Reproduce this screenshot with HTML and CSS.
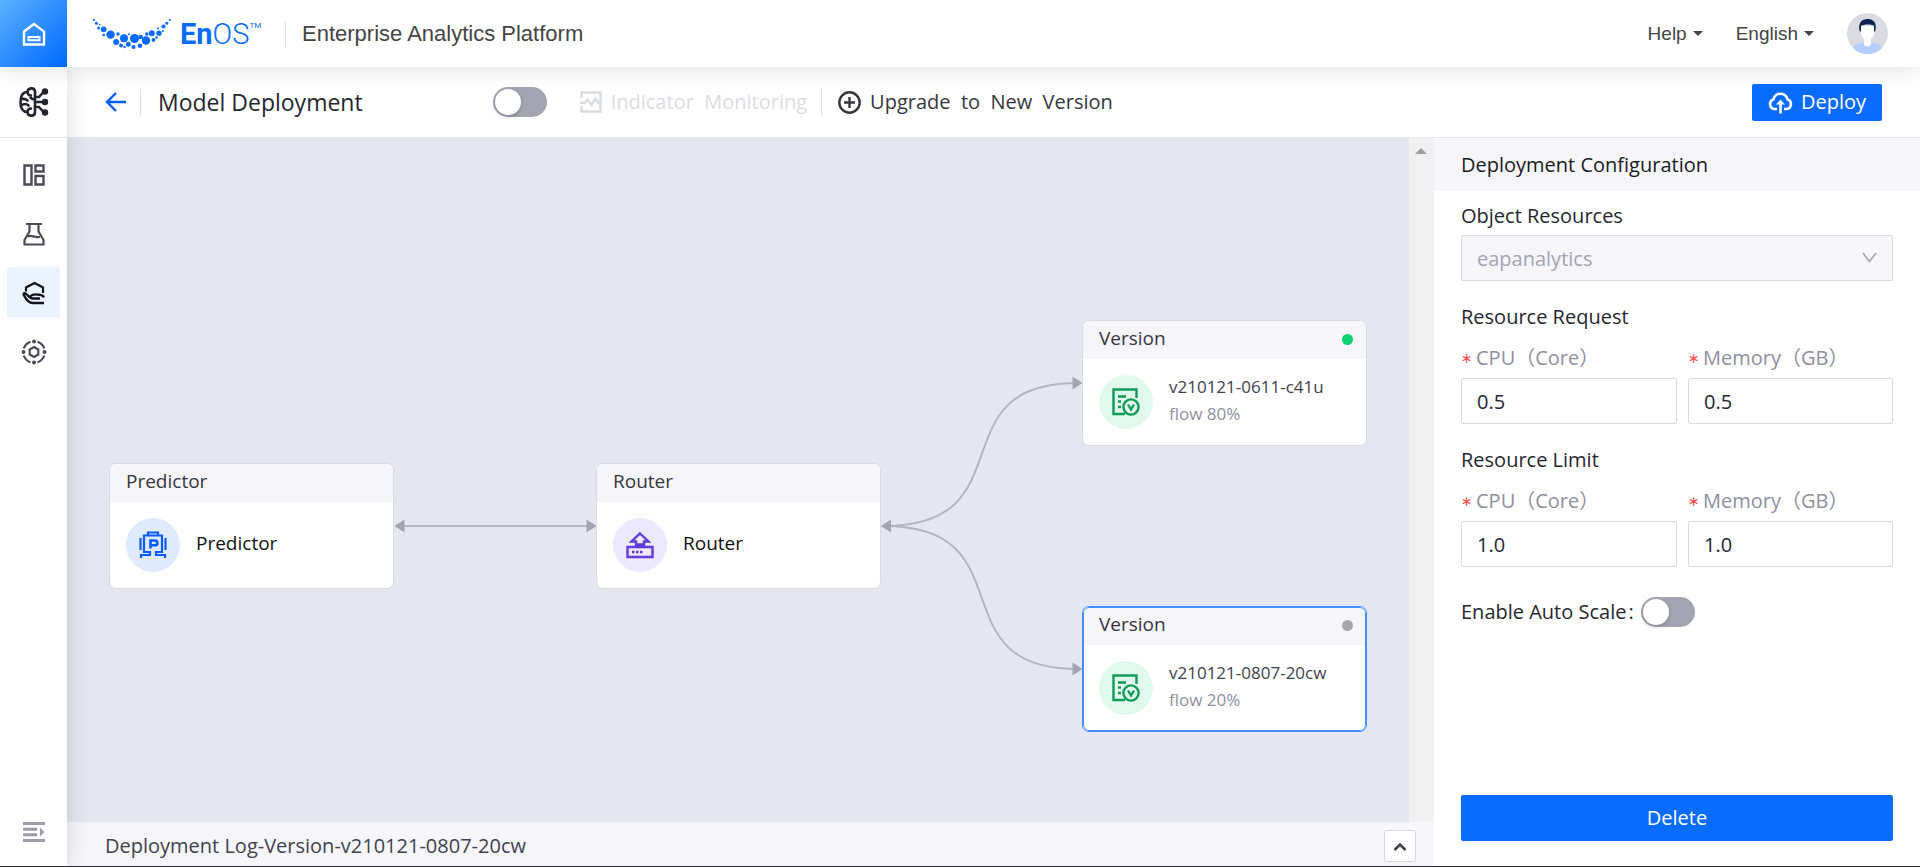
FILE: index.html
```html
<!DOCTYPE html>
<html lang="en">
<head>
<meta charset="utf-8">
<title>Model Deployment</title>
<link rel="stylesheet" href="styles.css">
</head>
<body>
<header class="topbar">
  <a class="home" href="#" aria-label="Home">
    <svg width="24" height="24" viewBox="0 0 24 24" fill="none" stroke="#fff" stroke-width="2.4"><path d="M2 9.500 12 2l10 7.500V22.500H2z"/><path d="M6.500 15h11v3.200h-11z" stroke-width="2"/></svg>
  </a>
  <div class="brand">
    <svg class="brand-dots" width="79" height="34" viewBox="93 18 79 34" fill="#0a6cff"><circle cx="94" cy="21" r="1.100"/><circle cx="96.400" cy="24.200" r="1.500"/><circle cx="98.600" cy="29" r="1.500"/><circle cx="99.700" cy="25.600" r=".8"/><circle cx="103.700" cy="30.300" r="2.900"/><circle cx="103.700" cy="36" r="1.300"/><circle cx="110.600" cy="35.600" r="4.200"/><circle cx="118" cy="35" r="1.700"/><circle cx="116.200" cy="43" r="3"/><circle cx="124" cy="39.300" r="4"/><circle cx="121" cy="46.500" r="1.900"/><circle cx="124.500" cy="48" r="1.200"/><circle cx="128.300" cy="45.300" r="2.500"/><circle cx="129" cy="35.200" r="1"/><circle cx="134.500" cy="39.500" r="4.600"/><circle cx="133.500" cy="48" r="2.100"/><circle cx="140.800" cy="38" r="2.300"/><circle cx="140" cy="46.800" r="2.300"/><circle cx="146" cy="41.500" r="4.200"/><circle cx="146.800" cy="35" r="1.800"/><circle cx="151.800" cy="34.300" r="3"/><circle cx="153.500" cy="41" r="1.900"/><circle cx="156.500" cy="38.500" r="1.300"/><circle cx="159" cy="34.300" r="2.700"/><circle cx="158" cy="29.500" r="1.100"/><circle cx="163.500" cy="27.500" r="2.100"/><circle cx="163" cy="32" r="1"/><circle cx="166.800" cy="24.300" r="1.500"/><circle cx="169.800" cy="21" r="1.100"/></svg>
    <span class="brand-name"><b>En</b>OS</span><span class="brand-tm">TM</span>
  </div>
  <span class="product">Enterprise Analytics Platform</span>
  <nav class="topnav">
    <button class="top-menu" type="button">Help <i class="caret"></i></button>
    <button class="top-menu" type="button">English <i class="caret"></i></button>
    <button class="avatar" type="button" aria-label="Account">
      <svg width="41" height="41" viewBox="0 0 41 41"><defs><clipPath id="face"><circle cx="20.500" cy="20.500" r="20.500"/></clipPath></defs><g clip-path="url(#face)"><path fill="#dadae3" d="M0 0h41v41H0z"/><path fill="#b4ceff" d="M5 41c0-8 4-11 12-11.500h7C32 30 36 33 36 41z"/><path fill="#fff" d="M17 24h7v6a3.500 3.500 0 0 1-7 0z"/><path fill="#fff" d="M13.500 13h14v5c0 5-3.500 9.500-7 9.500s-7-4.500-7-9.500z"/><path fill="#0b2350" d="M13 19c-2-7 0-10 3-12 3-1.500 7-1.200 9 0 3 1.500 5 5 3 12l-1-1v-5c-1-2-11-2-13 0v5z"/></g></svg>
    </button>
  </nav>
</header>

<div class="shell">
  <nav class="sidebar">
    <a class="side-app" href="#" aria-label="AI studio">
      <svg width="32" height="32" viewBox="0 0 32 32" fill="none" stroke="#24242e" stroke-width="2.600" stroke-linecap="round"><path d="M17 5.500c-.5-4.500-7.500-4-7.500.500-5 0-7 4-7 10s2 10 7 10c0 4.500 7 5 7.500.500zM3 13c3-.5 5 0 6.500 1.500M3 19.500c3-2 6-1.500 7.500 0M17 13.500c-2 0-3.500-.5-4.500-2M9.500 6c0 2 1.500 3.500 3.500 3.500M9.500 26c0-2 1.500-3.500 3.500-3.500"/><path d="M17 11h4l4-4.500M17 16h8M17 21h4l4 4.500"/><g fill="#24242e" stroke="none"><circle cx="27" cy="5.500" r="3.200"/><circle cx="27" cy="16" r="3.200"/><circle cx="27" cy="26.500" r="3.200"/></g></svg>
    </a>
    <div class="side-list">
      <a class="side-item" href="#" aria-label="Dashboard"><svg width="24" height="24" viewBox="0 0 24 24" fill="none" stroke="#4b4b57" stroke-width="2.400"><path d="M2.500 2.500h7v19h-7zM13.500 2.500h8v6h-8zM13.500 13h8v8.500h-8z"/></svg></a>
      <a class="side-item" href="#" aria-label="Lab"><svg width="24" height="24" viewBox="0 0 24 24" fill="none" stroke="#4b4b57" stroke-width="2.200"><path d="M4 2h16M7.500 2v7.500L2.500 18v4.500h19V18l-5-8.500V2M5.500 14.500c4-2 6 1.500 12.500.5"/></svg></a>
      <a class="side-item active" href="#" aria-label="Model deployment"><svg width="24" height="24" viewBox="0 0 24 24" fill="none" stroke="#14141c" stroke-width="2.200"><path d="M4 10.500V6.500L12.500 2 21 6.500v5.500"/><path d="M1.200 13c1.300-1.500 2.600-.5 3.600.5 1.800 1.800 2.700 4 5.700 4h7.500M1.200 13c1.800 3 4 9 9.300 9H22M8 15.500c2-2 4-2.200 7-2 3.500 0 6 .5 7 3" stroke-width="2.300"/></svg></a>
      <a class="side-item" href="#" aria-label="Settings"><svg width="26" height="26" viewBox="0 0 26 26" fill="none" stroke="#4b4b57" stroke-width="2.200"><path d="M13 8l4.300 2.500v5L13 18l-4.300-2.500v-5z"/><path d="M16.500 2.700a11 11 0 0 1 6.800 6.800M23.300 16.500a11 11 0 0 1-6.800 6.800M9.500 23.300a11 11 0 0 1-6.800-6.800M2.700 9.500a11 11 0 0 1 6.800-6.800"/><g fill="#4b4b57" stroke="none"><circle cx="13" cy="2.500" r="2"/><circle cx="23.500" cy="13" r="2"/><circle cx="13" cy="23.500" r="2"/><circle cx="2.500" cy="13" r="2"/></g></svg></a>
    </div>
    <button class="side-expand" type="button" aria-label="Expand menu"><svg width="22" height="20" viewBox="0 0 22 20" fill="#9c9cac"><path d="M0 0h22v3H0zM0 5.700h14v3H0zM0 11.300h14v3H0zM0 17h22v3H0zM17 5.500l4.500 4.500-4.500 4.500z"/></svg></button>
  </nav>

  <main class="main">
    <div class="toolbar">
      <a class="back" href="#" aria-label="Back"><svg width="22" height="20" viewBox="0 0 22 20" fill="none" stroke="#0a5cff" stroke-width="2.400"><path d="M21 10H2M11 1L2 10l9 9"/></svg></a>
      <i class="divider"></i>
      <h1 class="page-title">Model Deployment</h1>
      <input class="switch" type="checkbox" role="switch" aria-label="Enable deployment">
      <button class="tool tool-off" type="button" disabled><svg width="22" height="22" viewBox="0 0 22 22" fill="none" stroke="#dcdce3" stroke-width="2.400"><path d="M1.500 7V1.500h19v19h-19V15M0 12h4.500l3-3.500 4 5.500 4-6.500 3 4.500H22"/></svg>Indicator&nbsp; Monitoring</button>
      <i class="divider"></i>
      <button class="tool" type="button"><svg width="23" height="23" viewBox="0 0 23 23" fill="none" stroke="#363640" stroke-width="2.400"><circle cx="11.500" cy="11.500" r="10.200"/><path d="M11.500 6v11M6 11.500h11"/></svg>Upgrade&nbsp; to&nbsp; New&nbsp; Version</button>
      <button class="primary deploy" type="button"><svg width="25" height="24" viewBox="0 0 25 24" fill="none" stroke="#fff" stroke-width="2.600"><path d="M9 19H6.500a5 5 0 0 1-1-9.700 7.200 7.200 0 0 1 14 0 5 5 0 0 1-1 9.700H16M12.500 23.500V13"/><path d="M12.500 9.500l4.500 5H8z" fill="#fff" stroke="none"/></svg>Deploy</button>
    </div>

    <div class="work">
      <section class="stage">
        <div class="stage-row">
          <div class="canvas">
            <svg class="edges" width="1342" height="684" viewBox="67 138 1342 684" fill="none" stroke="#b4b4c2" stroke-width="2"><path d="M402 526H590M884 526C1028 526 936 383 1077 383M884 526C1028 526 936 669 1077 669"/><path fill="#a3a3b2" stroke="none" d="M394.500 526l10-6.500v13zM596.500 526l-10-6.500v13zM881 526l10-6.500v13zM1082.500 383l-10-6.500v13zM1082.500 669l-10-6.500v13z"/></svg>
            <article class="node node-predictor">
              <h2 class="node-head">Predictor</h2>
              <div class="node-body"><span class="node-icon blue"><svg width="28" height="28" viewBox="0 0 28 28" fill="none" stroke="#0a5cff" stroke-width="2.200"><path d="M1.500 7v12M26.500 7v12M9 4V1.500h10V4M2 27v-3h9v-3H5V4.500h18V21h-6v3h9v3"/><path d="M11.500 17.500V9.500h4.500a2.300 2.300 0 0 1 0 4.800h-4.500" stroke-width="2.600"/></svg></span><p class="node-label">Predictor</p></div>
            </article>
            <article class="node node-router">
              <h2 class="node-head">Router</h2>
              <div class="node-body"><span class="node-icon violet"><svg width="28" height="28" viewBox="0 0 28 28" fill="none" stroke="#5a3ddb" stroke-width="2.400"><path d="M1.500 16h25v10h-25zM14 2.500l8.500 8H18v3h-8v-3H5.500z"/><path d="M6 21h2.500M10 21h2.500M14 21h2.500"/></svg></span><p class="node-label">Router</p></div>
            </article>
            <article class="node node-v1">
              <h2 class="node-head">Version<i class="dot on"></i></h2>
              <div class="node-body"><span class="node-icon green"><svg width="28" height="28" viewBox="0 0 28 28" fill="none" stroke="#0f9b57" stroke-width="2.400"><path d="M13 26H1.500V1.500h23V10M6 8.500h8M6 13.500h3M6 19h3"/><circle cx="19" cy="19" r="7.600"/><path d="M16 16.500l3 5 3-5"/></svg></span><div class="node-text"><p class="node-id">v210121-0611-c41u</p><p class="node-flow">flow 80%</p></div></div>
            </article>
            <article class="node node-v2 selected">
              <h2 class="node-head">Version<i class="dot"></i></h2>
              <div class="node-body"><span class="node-icon green"><svg width="28" height="28" viewBox="0 0 28 28" fill="none" stroke="#0f9b57" stroke-width="2.400"><path d="M13 26H1.500V1.500h23V10M6 8.500h8M6 13.500h3M6 19h3"/><circle cx="19" cy="19" r="7.600"/><path d="M16 16.500l3 5 3-5"/></svg></span><div class="node-text"><p class="node-id">v210121-0807-20cw</p><p class="node-flow">flow 20%</p></div></div>
            </article>
          </div>
          <div class="scroll"><i class="scroll-up"></i></div>
        </div>
        <footer class="log">
          <span>Deployment Log-Version-v210121-0807-20cw</span>
          <button class="log-toggle" type="button" aria-label="Show log"><svg width="14" height="9" viewBox="0 0 14 9" fill="none" stroke="#41414d" stroke-width="2.600"><path d="M1.500 8L7 2.500 12.500 8"/></svg></button>
        </footer>
      </section>

      <aside class="panel">
        <h2 class="panel-head">Deployment Configuration</h2>
        <form class="form">
          <label class="form-title" for="res">Object Resources</label>
          <div class="select-wrap">
            <select class="field" id="res" disabled><option>eapanalytics</option></select>
            <svg class="chevron" width="15" height="11" viewBox="0 0 15 11" fill="none" stroke="#a3a3b2" stroke-width="1.600"><path d="M1 1l6.500 8.500L14 1"/></svg>
          </div>
          <fieldset class="group">
            <legend class="form-title">Resource Request</legend>
            <div class="pair">
              <div><label class="req" for="rc">CPU（Core）</label><input class="field" id="rc" value="0.5"></div>
              <div><label class="req" for="rm">Memory（GB）</label><input class="field" id="rm" value="0.5"></div>
            </div>
          </fieldset>
          <fieldset class="group">
            <legend class="form-title">Resource Limit</legend>
            <div class="pair">
              <div><label class="req" for="lc">CPU（Core）</label><input class="field" id="lc" value="1.0"></div>
              <div><label class="req" for="lm">Memory（GB）</label><input class="field" id="lm" value="1.0"></div>
            </div>
          </fieldset>
          <div class="scale"><label for="auto">Enable Auto Scale<span class="colon">:</span></label><input class="switch" id="auto" type="checkbox" role="switch"></div>
          <button class="primary delete" type="button">Delete</button>
        </form>
      </aside>
    </div>
  </main>
</div>
</body>
</html>
```
FILE: styles.css
```css
*, *::before, *::after { box-sizing: border-box; }
body {
  margin: 0;
  min-height: 100vh;
  display: flex;
  flex-direction: column;
  border-bottom: 1px solid #1f3038;
  background: #fff;
  color: #26262f;
  font: 20px/28px "Open Sans", "Noto Sans CJK SC", sans-serif;
}
h1, h2, p { margin: 0; font-weight: 400; }
button, input, select { font: inherit; color: inherit; margin: 0; }
button { border: 0; background: none; padding: 0; cursor: pointer; }
svg { display: block; flex: none; }

.topbar {
  position: relative;
  z-index: 3;
  display: flex;
  align-items: center;
  height: 67px;
  background: #fff;
  box-shadow: 0 2px 24px rgba(0, 0, 0, .13);
  font-family: "Liberation Sans", Arial, sans-serif;
  color: #444;
}
.home {
  display: flex;
  align-items: center;
  justify-content: center;
  width: 67px;
  height: 67px;
  background: linear-gradient(135deg, #5ab1ff, #0068ff);
}
.brand {
  display: flex;
  align-items: center;
  height: 24px;
  width: 219px;
  padding-left: 26px;
  border-right: 1px solid #dcdcdc;
  color: #0a6cff;
}
.brand-name { margin-left: 8px; font: 300 29px/34px Roboto, sans-serif; }
.brand-name b { font-weight: 700; }
.brand-tm { align-self: flex-start; font: 8px/8px Roboto, sans-serif; }
.product { margin-left: 16px; font-size: 22px; }
.topnav { display: flex; align-items: center; margin-left: auto; padding-right: 32px; }
.top-menu { display: flex; align-items: center; gap: 6px; margin-right: 33px; font-size: 19px; }
.caret { border: 5px solid transparent; border-top-color: #444; border-bottom: 0; }
.avatar { border-radius: 50%; }

.shell { flex: 1; display: flex; }
.sidebar {
  position: relative;
  z-index: 2;
  flex: none;
  display: flex;
  flex-direction: column;
  width: 67px;
  background: #fff;
  box-shadow: 2px 0 24px rgba(0, 0, 0, .12);
}
.side-app {
  display: flex;
  align-items: center;
  justify-content: center;
  height: 71px;
  border-bottom: 1px solid #e4e4ea;
}
.side-list { display: flex; flex-direction: column; gap: 8px; padding: 11px 7px 0; }
.side-item {
  display: flex;
  align-items: center;
  justify-content: center;
  height: 51px;
  border-radius: 3px;
}
.side-item.active { background: #eaf3ff; }
.side-expand { margin: auto auto 24px; }

.main { flex: 1; min-width: 0; display: flex; flex-direction: column; }
.toolbar {
  display: flex;
  align-items: center;
  height: 71px;
  padding: 0 38px;
  border-bottom: 1px solid #e4e4ea;
}
.divider { width: 1px; height: 25px; background: #dcdce3; }
.back { margin-right: 13px; }
.page-title { margin-left: 17px; font-size: 23px; }
.toolbar .switch { margin: 0 33px 0 130px; }
.tool { display: flex; align-items: center; gap: 9px; color: #363640; }
.tool-off { margin-right: 14px; color: #dcdce3; }
.divider + .tool { margin-left: 16px; }
.primary { background: #0a6cff; color: #fff; border-radius: 2px; }
.deploy {
  display: flex;
  align-items: center;
  gap: 8px;
  height: 37px;
  margin-left: auto;
  padding: 0 16px;
}
.switch {
  appearance: none;
  flex: none;
  width: 54px;
  height: 30px;
  padding: 2px;
  border-radius: 15px;
  background: #a3a3b2;
}
.switch::before {
  content: "";
  display: block;
  width: 26px;
  height: 26px;
  border-radius: 50%;
  background: #fff;
  box-shadow: 0 2px 4px rgba(0, 35, 11, .2);
}

.work { flex: 1; display: flex; }
.stage { flex: 1; min-width: 0; display: flex; flex-direction: column; }
.stage-row { flex: 1; display: flex; }
.canvas { position: relative; flex: 1; overflow: hidden; background: #e6e6f0; }
.edges { position: absolute; left: 0; top: 0; }
.node {
  position: absolute;
  width: 285px;
  height: 126px;
  border: 1px solid #dadae4;
  border-radius: 7px;
  background: #fff;
  overflow: hidden;
}
.node.selected { border-color: #3f8fff; }
.node.selected::after {
  content: "";
  position: absolute;
  inset: 0;
  border: 1px solid #3f8fff;
  border-radius: 6px;
}
.node-predictor { left: 42px; top: 325px; }
.node-router { left: 529px; top: 325px; }
.node-v1 { left: 1015px; top: 182px; }
.node-v2 { left: 1015px; top: 468px; }
.node-head {
  display: flex;
  align-items: center;
  justify-content: space-between;
  height: 38px;
  padding: 0 13px 5px 16px;
  background: #f5f5fa;
  font-size: 19px;
  color: #36363f;
}
.dot { width: 11px; height: 11px; margin-top: 3px; border-radius: 50%; background: #a8a8a8; }
.dot.on { background: #0dd16e; }
.node-body { display: flex; align-items: center; padding: 16px; gap: 16px; }
.node-icon {
  flex: none;
  display: flex;
  align-items: center;
  justify-content: center;
  width: 54px;
  height: 54px;
  border-radius: 50%;
}
.blue { background: #dfeaff; }
.violet { background: #ece8fd; }
.green { background: #e1f9ec; }
.node-label { padding-bottom: 4px; font-size: 19px; color: #111; }
.node-text { margin: -4px 0 0; }
.node-id { font-size: 17px; line-height: 27px; color: #41414d; }
.node-flow { font-size: 17px; line-height: 27px; color: #8f8f9f; }

.scroll { width: 25px; padding: 10px 6px; background: #f0f0f0; }
.scroll-up { display: block; border: 6px solid transparent; border-bottom-color: #a0a0a0; border-top: 0; width: 0; }
.log {
  display: flex;
  align-items: center;
  justify-content: space-between;
  height: 44px;
  padding: 4px 18px 0 38px;
  background: #f5f5fa;
  color: #41414d;
}
.log-toggle {
  display: flex;
  align-items: center;
  justify-content: center;
  width: 32px;
  height: 32px;
  border: 1px solid #d9d9e2;
  border-radius: 2px;
  background: #fff;
}

.panel { flex: none; display: flex; flex-direction: column; width: 486px; background: #fff; }
.panel-head { padding: 13px 27px 12px; background: #f5f5fa; font-size: 20px; color: #1b1b22; }
.form { flex: 1; display: flex; flex-direction: column; padding: 11px 27px 25px; }
.form-title { display: block; padding: 0; line-height: 28px; }
.field {
  display: block;
  width: 100%;
  height: 46px;
  padding: 1px 15px 0;
  border: 1px solid #d9d9e2;
  border-radius: 2px;
  background: #fff;
  outline: 0;
}
.select-wrap { position: relative; margin-top: 5px; }
.select-wrap .field { appearance: none; background: #f5f5fa; color: #a3a3b2; opacity: 1; }
.chevron { position: absolute; right: 16px; top: 17px; }
.group { margin: 22px 0 0; padding: 0; border: 0; min-width: 0; }
.pair { display: grid; grid-template-columns: 216fr 205fr; gap: 11px; padding-top: 13px; }
.pair label { display: flex; align-items: center; margin-bottom: 6px; line-height: 28px; color: #8f8f9f; }
.req::before {
  content: "\2217";
  width: 15px;
  color: #ff4d4f;
  font: 14px/28px "DejaVu Sans", sans-serif;
}
.scale { display: flex; align-items: center; gap: 7px; margin-top: 30px; }
.colon { margin-left: 2px; }
.delete { height: 46px; margin-top: auto; }
```
